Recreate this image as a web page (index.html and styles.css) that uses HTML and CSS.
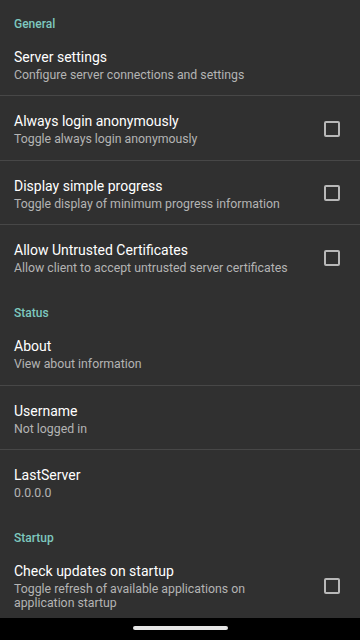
FILE: index.html
```html
<!DOCTYPE html>
<html lang="en">
<head>
  <meta charset="UTF-8">
  <meta name="viewport" content="width=device-width, initial-scale=1.0">
  <title>Settings</title>
  <link rel="stylesheet" href="styles.css">
</head>
<body>
  <div class="screen">
    <div class="prefs">
      <div class="category">General</div>
      <div class="pref">
        <div class="pref-text">
          <div class="pref-title">Server settings</div>
          <div class="pref-summary">Configure server connections and settings</div>
        </div>
      </div>
      <div class="pref">
        <div class="pref-text">
          <div class="pref-title">Always login anonymously</div>
          <div class="pref-summary">Toggle always login anonymously</div>
        </div>
        <span class="checkbox"></span>
      </div>
      <div class="pref">
        <div class="pref-text">
          <div class="pref-title">Display simple progress</div>
          <div class="pref-summary">Toggle display of minimum progress information</div>
        </div>
        <span class="checkbox"></span>
      </div>
      <div class="pref last">
        <div class="pref-text">
          <div class="pref-title">Allow Untrusted Certificates</div>
          <div class="pref-summary">Allow client to accept untrusted server certificates</div>
        </div>
        <span class="checkbox"></span>
      </div>

      <div class="category">Status</div>
      <div class="pref">
        <div class="pref-text">
          <div class="pref-title">About</div>
          <div class="pref-summary">View about information</div>
        </div>
      </div>
      <div class="pref">
        <div class="pref-text">
          <div class="pref-title">Username</div>
          <div class="pref-summary">Not logged in</div>
        </div>
      </div>
      <div class="pref last">
        <div class="pref-text">
          <div class="pref-title">LastServer</div>
          <div class="pref-summary">0.0.0.0</div>
        </div>
      </div>

      <div class="category">Startup</div>
      <div class="pref last">
        <div class="pref-text">
          <div class="pref-title">Check updates on startup</div>
          <div class="pref-summary">Toggle refresh of available applications on application startup</div>
        </div>
        <span class="checkbox"></span>
      </div>
    </div>

    <div class="navbar">
      <span class="nav-pill"></span>
    </div>
  </div>
</body>
</html>
```

FILE: styles.css
```css
/* Settings screen */
body {
  margin: 0;
  background-color: #303030;
  font-family: Roboto, "Noto Sans", Arial, sans-serif;
  -webkit-font-smoothing: antialiased;
}

.screen {
  display: flex;
  flex-direction: column;
  height: 640px;
  width: 360px;
  overflow: hidden;
}

.prefs {
  flex: 1;
  overflow: hidden;
}

.category {
  padding: 16.5px 14px 0;
  height: 15px;
  line-height: 15px;
  font-size: 12px;
  font-weight: 500;
  color: #7ec8bf;
}

.pref {
  display: flex;
  align-items: center;
  padding: 15px 20px 13.5px 14px;
  border-bottom: 1px solid #474747;
}

.pref.last {
  border-bottom-color: transparent;
}

.pref-text {
  flex: 1;
  min-width: 0;
  padding-right: 24px;
}

.pref-title {
  font-size: 14px;
  line-height: 20px;
  color: #ffffff;
}

.pref-summary {
  margin-top: 1px;
  font-size: 12.3px;
  line-height: 14px;
  color: #b4b4b4;
}

.checkbox {
  flex: none;
  width: 12px;
  height: 12px;
  border: 2px solid #b8b8b8;
  border-radius: 2px;
}

.navbar {
  flex: none;
  height: 22px;
  background-color: #000;
  display: flex;
  justify-content: center;
  padding-top: 8px;
  box-sizing: border-box;
}

.nav-pill {
  width: 95px;
  height: 4px;
  border-radius: 2px;
  background-color: #e6e6e6;
}
```
